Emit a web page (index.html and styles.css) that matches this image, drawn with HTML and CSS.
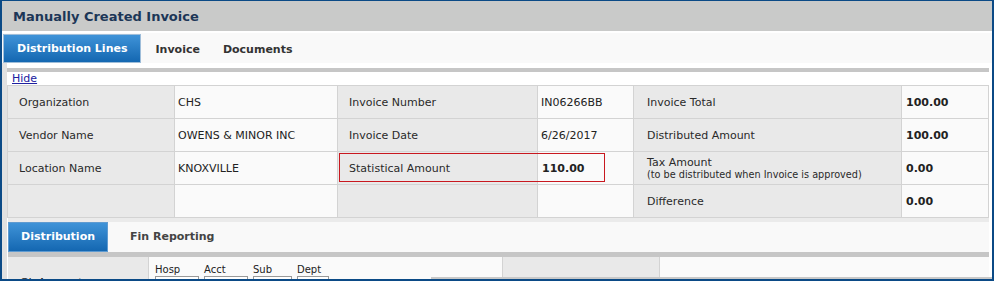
FILE: index.html
```html
<!DOCTYPE html>
<html lang="en">
<head>
    <meta charset="UTF-8" />
    <meta name="viewport" content="width=device-width, initial-scale=1.0" />
    <title>Manually Created Invoice</title>
    <link rel="stylesheet" href="styles.css">
</head>
<body>
    <div class="window">
        <div class="title-bar">
            <h1>Manually Created Invoice</h1>
        </div>

        <div class="tabs main-tabs">
            <a class="tab active">Distribution Lines</a>
            <a class="tab">Invoice</a>
            <a class="tab">Documents</a>
        </div>

        <div class="body">
            <div class="panel">
                <div class="rule"></div>
                <a class="hide-link" href="#">Hide</a>

                <div class="summary">
                    <div class="cell label">Organization</div>
                    <div class="cell value">CHS</div>
                    <div class="cell label">Invoice Number</div>
                    <div class="cell value">IN06266BB</div>
                    <div class="cell label wide">Invoice Total</div>
                    <div class="cell value strong">100.00</div>

                    <div class="cell label">Vendor Name</div>
                    <div class="cell value">OWENS &amp; MINOR INC</div>
                    <div class="cell label">Invoice Date</div>
                    <div class="cell value">6/26/2017</div>
                    <div class="cell label wide">Distributed Amount</div>
                    <div class="cell value strong">100.00</div>

                    <div class="cell label">Location Name</div>
                    <div class="cell value">KNOXVILLE</div>
                    <div class="cell label">Statistical Amount</div>
                    <div class="cell value strong">110.00</div>
                    <div class="cell label wide stacked">
                        <span>Tax Amount</span>
                        <span class="note">(to be distributed when Invoice is approved)</span>
                    </div>
                    <div class="cell value strong">0.00</div>

                    <div class="cell label"></div>
                    <div class="cell value"></div>
                    <div class="cell label"></div>
                    <div class="cell value"></div>
                    <div class="cell label wide">Difference</div>
                    <div class="cell value strong">0.00</div>

                    <div class="highlight"></div>
                </div>

                <div class="distribution">
                    <div class="tabs sub-tabs">
                        <a class="tab active">Distribution</a>
                        <a class="tab">Fin Reporting</a>
                    </div>
                    <div class="rule thick"></div>

                    <div class="dist-row">
                        <div class="cell label">GL Account</div>
                        <div class="cell fields">
                            <div class="field">
                                <span>Hosp</span>
                                <input type="text" class="w44">
                            </div>
                            <div class="field">
                                <span>Acct</span>
                                <input type="text" class="w44">
                            </div>
                            <div class="field">
                                <span>Sub</span>
                                <input type="text" class="w39">
                            </div>
                            <div class="field">
                                <span>Dept</span>
                                <input type="text" class="w32">
                            </div>
                            <div class="lookup"></div>
                        </div>
                        <div class="cell label"></div>
                        <div class="cell value"></div>
                    </div>
                </div>
            </div>
        </div>

        <div class="hscroll"></div>
    </div>
</body>
</html>
```

FILE: styles.css
```css
body {
    margin: 0;
    font-family: "DejaVu Sans", Verdana, sans-serif;
    font-size: 11px;
    color: #222;
    background: #fff;
}

.window {
    position: relative;
    box-sizing: border-box;
    width: 994px;
    height: 281px;
    border: 2px solid #0b4a86;
    border-top-width: 1px;
    background: #fff;
    overflow: hidden;
    display: flex;
    flex-direction: column;
}

.title-bar {
    height: 30px;
    background: #c9cac9;
    flex-shrink: 0;
}

.title-bar h1 {
    margin: 0;
    padding: 2px 0 0 11px;
    font-size: 13px;
    line-height: 28px;
    color: #1c3657;
}

.tabs {
    display: flex;
    background: #f9f9f9;
    flex-shrink: 0;
}

.tab {
    display: block;
    font-weight: bold;
    color: #333;
    cursor: pointer;
}

.tab.active {
    color: #fff;
    background: linear-gradient(#3f93d8, #1467b1);
    border: 1px solid #9ebdd9;
}

.main-tabs {
    margin-top: 2px;
    height: 30px;
    padding-top: 1px;
    box-sizing: border-box;
    gap: 5px;
}

.main-tabs .tab {
    line-height: 29px;
    padding: 1px 9px 0;
}

.main-tabs .tab.active {
    margin-left: 1px;
    padding: 1px 13px 0;
    line-height: 26px;
}

.body {
    flex: 1;
    background: #e1e1e1;
    padding-left: 5px;
}

.panel {
    height: 100%;
    background: #fff;
    padding: 5px 3px 0 0;
    box-sizing: border-box;
}

.rule {
    height: 4px;
    background: #c6c6c6;
}

.rule.thick {
    height: 5px;
}

.hide-link {
    display: block;
    padding: 1px 0 0 5px;
    line-height: 12px;
    color: #2020a0;
}

.summary {
    position: relative;
    display: grid;
    grid-template-columns: 166px 162px 199px 95px 267px 86px;
    grid-auto-rows: 32px;
    gap: 1px;
    background: #d3d3d3;
    border: 1px solid #d3d3d3;
}

.cell {
    display: flex;
    align-items: center;
    white-space: nowrap;
    padding-top: 1px;
    box-sizing: border-box;
}

.label {
    background: #e9e9e9;
    padding-left: 11px;
    color: #2a2a2a;
}

.label.wide {
    padding-left: 13px;
}

.label.stacked {
    flex-direction: column;
    align-items: flex-start;
    justify-content: center;
    line-height: 13px;
}

.note {
    font-size: 9.7px;
    line-height: 12px;
}

.value {
    background: #fafafa;
    padding-left: 3px;
}

.strong {
    font-weight: bold;
    padding-left: 4px;
}

.highlight {
    position: absolute;
    left: 331px;
    top: 67px;
    width: 266px;
    height: 29px;
    box-sizing: border-box;
    border: 1px solid #c8181f;
}

.distribution {
    margin-left: 1px;
    border-top: 4px solid #ebebeb;
}

.sub-tabs {
    height: 30px;
}

.sub-tabs .tab {
    line-height: 30px;
    padding: 0 22px;
    color: #444;
}

.sub-tabs .tab.active {
    color: #fff;
    padding: 0 12px;
    line-height: 28px;
    border-color: #5f9bd1;
}

.dist-row {
    display: grid;
    grid-template-columns: 140px 353px 156px 1fr;
    grid-auto-rows: 50px;
    gap: 1px;
    background: #d3d3d3;
}

.dist-row .label {
    padding-left: 12px;
}

.fields {
    background: #fafafa;
    align-items: flex-start;
    padding: 7px 0 0 6px;
    gap: 5px;
}

.field {
    display: flex;
    flex-direction: column;
    font-size: 10px;
    line-height: 11px;
}

.field input {
    margin: 1px 0 0;
    height: 20px;
    box-sizing: border-box;
    border: 1px solid #999;
    padding: 0;
    font: inherit;
}

.w44 { width: 44px; }
.w39 { width: 39px; }
.w32 { width: 32px; }

.lookup {
    margin: 20px 0 0 18px;
    width: 1px;
    height: 12px;
    background: #777;
}

.hscroll {
    position: absolute;
    left: 429px;
    right: 0;
    bottom: 0;
    height: 2px;
    background: #c8c8c8;
}
```
